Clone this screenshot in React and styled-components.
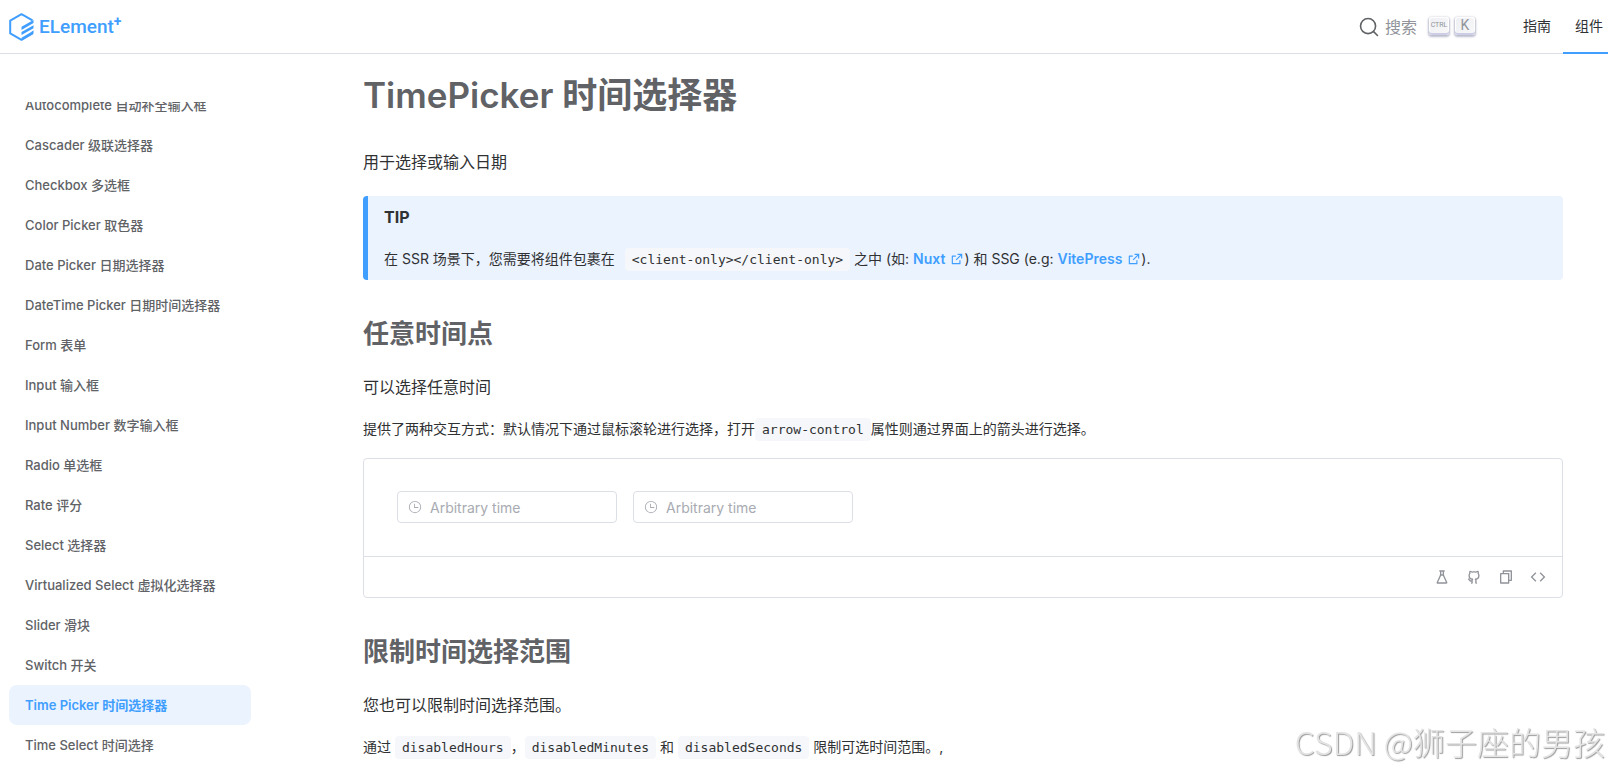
import React from 'react';
import styled, { createGlobalStyle } from 'styled-components';
import {
  RiCodeLine,
  RiExternalLinkLine,
  RiFileCopyLine,
  RiFlaskLine,
  RiGithubLine,
} from 'react-icons/ri';

const GlobalStyle = createGlobalStyle`
  *, *::before, *::after {
    box-sizing: border-box;
  }

  body {
    margin: 0;
    background: #fff;
    color: #303133;
    font-family: Inter, "Noto Sans CJK SC", sans-serif;
    font-size: 14px;
    overflow-x: hidden;
  }
`;

const Header = styled.header`
  display: flex;
  align-items: center;
  justify-content: space-between;
  height: 54px;
  padding-left: 9px;
  border-bottom: 1px solid #dcdfe6;
`;

const Logo = styled.a`
  display: flex;
  align-items: center;
  gap: 5px;
  color: #409eff;
  font-family: Roboto, sans-serif;
  font-size: 19px;
  font-weight: 500;
  line-height: 28px;
  text-decoration: none;

  sup {
    align-self: flex-start;
    margin-left: -5px;
    font-size: 14px;
    font-weight: 700;
    line-height: 16px;
  }
`;

const HeaderRight = styled.div`
  display: flex;
  align-self: stretch;
  align-items: center;
  gap: 36px;
`;

const SearchButton = styled.button`
  display: flex;
  align-items: center;
  padding: 0;
  border: 0;
  background: none;
  color: #909399;
  font-family: inherit;
  font-size: 16px;
  line-height: 24px;
  cursor: pointer;

  svg {
    margin-right: 6px;
    color: #606266;
  }
`;

const Keys = styled.span`
  display: flex;
  gap: 6px;
  margin: 0 0 2px 12px;
`;

const Key = styled.kbd`
  width: 20px;
  height: 18px;
  border-radius: 3px;
  background: linear-gradient(-225deg, #eeeff4, #f8f8f8);
  box-shadow: inset 0 -2px 0 0 #cdcde6, inset 0 0 1px 1px #fff,
    0 1px 2px 1px rgba(30, 35, 90, 0.3);
  color: #909399;
  font-family: Roboto, sans-serif;
  font-size: ${(props) => (props.$small ? '7px' : '14px')};
  line-height: 16px;
  text-align: center;
`;

const Nav = styled.nav`
  display: flex;
  align-self: stretch;
  margin-bottom: -1px;
`;

const NavLink = styled.a`
  display: flex;
  align-items: center;
  padding: ${(props) => (props.$active ? '0 5px 2px 12px' : '0 12px 2px')};
  border-bottom: 2px solid ${(props) => (props.$active ? '#409eff' : 'transparent')};
  color: #303133;
  text-decoration: none;
`;

const Layout = styled.div`
  display: flex;
`;

const Sidebar = styled.aside`
  flex: 0 0 260px;
  margin-top: 48px;
  padding: 0 9px;
  overflow: hidden;
`;

/* the list sits slightly scrolled under the top edge of the sidebar */
const SidebarList = styled.ul`
  margin: -17px 0 0;
  padding: 0;
  list-style: none;
`;

const SidebarLink = styled.a`
  display: block;
  padding: 8px 16px;
  border-radius: 8px;
  background: ${(props) => (props.$active ? '#ebf3ff' : 'transparent')};
  color: ${(props) => (props.$active ? '#409eff' : '#606266')};
  font-size: 13px;
  font-weight: ${(props) => (props.$active ? 600 : 500)};
  line-height: 24px;
  text-decoration: none;
  white-space: nowrap;
`;

const Content = styled.main`
  flex: 1;
  min-width: 0;
  padding: 18px 45px 0 103px;
`;

const Title = styled.h1`
  margin: 0 0 32px;
  color: #606266;
  font-size: 35px;
  font-weight: 600;
  line-height: 46px;
`;

const SubTitle = styled.h2`
  margin: 36px 0 23px;
  color: #606266;
  font-size: 26px;
  font-weight: 700;
  line-height: 36px;
`;

const Lead = styled.p`
  margin: 0;
  font-size: 16px;
  line-height: 24px;
`;

const Text = styled.p`
  margin: 18px 0 0;
  line-height: 24px;
`;

const Code = styled.code`
  padding: 4px 7px;
  border-radius: 4px;
  background: #f5f7fa;
  font-family: "DejaVu Sans Mono", monospace;
  font-size: 13px;
  line-height: 16px;
`;

const Tip = styled.div`
  margin-top: 22px;
  padding: 9px 16px;
  border-left: 5px solid #409eff;
  border-radius: 4px;
  background: #ebf3ff;

  ${Code} {
    margin-left: 6px;
  }
`;

const TipTitle = styled.p`
  margin: 0;
  font-size: 16px;
  font-weight: 700;
  line-height: 24px;
`;

const ExternalLink = styled.a`
  color: #409eff;
  font-weight: 600;
  text-decoration: none;

  svg {
    margin-left: 5px;
    vertical-align: -2px;
  }
`;

const Demo = styled.section`
  margin-top: 17px;
  border: 1px solid #dcdfe6;
  border-radius: 4px;
`;

const Showcase = styled.div`
  display: flex;
  gap: 16px;
  padding: 32px 33px 33px;
`;

const TimeInput = styled.label`
  display: flex;
  align-items: center;
  gap: 8px;
  width: 220px;
  height: 32px;
  padding: 0 10px;
  border: 1px solid #dcdfe6;
  border-radius: 4px;
  color: #a8abb2;

  svg {
    flex: none;
  }

  input {
    flex: 1;
    min-width: 0;
    padding: 0;
    border: 0;
    outline: 0;
    background: none;
    color: #606266;
    font: inherit;
  }

  input::placeholder {
    color: #a8abb2;
  }
`;

const Actions = styled.div`
  display: flex;
  align-items: center;
  justify-content: flex-end;
  gap: 16px;
  height: 41px;
  padding: 0 16px;
  border-top: 1px solid #dcdfe6;
`;

const IconButton = styled.button`
  display: flex;
  padding: 0;
  border: 0;
  background: none;
  color: #909399;
  font-size: 16px;
  cursor: pointer;
`;

const Watermark = styled.div`
  position: fixed;
  right: 3px;
  bottom: 7px;
  color: #e4e4e4;
  font-family: "Noto Sans CJK SC", sans-serif;
  font-size: 32px;
  font-weight: 300;
  line-height: 48px;
  text-shadow: 1px 1px 1px #999;
  white-space: nowrap;
  pointer-events: none;
`;

const components = [
  'Autocomplete 自动补全输入框',
  'Cascader 级联选择器',
  'Checkbox 多选框',
  'Color Picker 取色器',
  'Date Picker 日期选择器',
  'DateTime Picker 日期时间选择器',
  'Form 表单',
  'Input 输入框',
  'Input Number 数字输入框',
  'Radio 单选框',
  'Rate 评分',
  'Select 选择器',
  'Virtualized Select 虚拟化选择器',
  'Slider 滑块',
  'Switch 开关',
  'Time Picker 时间选择器',
  'Time Select 时间选择',
];

function LogoMark() {
  return (
    <svg width="25" height="28" viewBox="0 0 25 28" fill="none" aria-hidden="true">
      <path
        d="M23.5 7.4 12.5 1.2 1.2 7.6v12.8l11.3 6.4 11-6.3"
        stroke="#409eff"
        strokeWidth="2"
        strokeLinejoin="round"
      />
      <path
        d="M24.5 7v3L12.5 17v-3.2zM24.5 12.2v3L12.5 22v-3zM24.5 17.2v3.6L12.5 27.6v-2.8L21.8 19.3z"
        fill="#409eff"
      />
    </svg>
  );
}

function SearchIcon() {
  return (
    <svg width="20" height="20" viewBox="0 0 20 20" aria-hidden="true">
      <path
        d="M14.386 14.386l4.0877 4.0877-4.0877-4.0877c-2.9418 2.9419-7.7115 2.9419-10.6533 0-2.9419-2.9418-2.9419-7.7115 0-10.6533 2.9418-2.9419 7.7115-2.9419 10.6533 0 2.9419 2.9418 2.9419 7.7115 0 10.6533z"
        fill="none"
        stroke="currentColor"
        strokeWidth="1.6"
        strokeLinecap="round"
        strokeLinejoin="round"
      />
    </svg>
  );
}

function ClockIcon() {
  return (
    <svg width="14" height="14" viewBox="0 0 1024 1024" fill="currentColor" aria-hidden="true">
      <path d="M512 896a384 384 0 1 0 0-768 384 384 0 0 0 0 768m0 64a448 448 0 1 1 0-896 448 448 0 0 1 0 896" />
      <path d="M480 256a32 32 0 0 1 32 32v256a32 32 0 0 1-64 0V288a32 32 0 0 1 32-32" />
      <path d="M480 512h256q32 0 32 32t-32 32H480q-32 0-32-32t32-32" />
    </svg>
  );
}

function TimeField() {
  return (
    <TimeInput>
      <ClockIcon />
      <input type="text" placeholder="Arbitrary time" aria-label="Arbitrary time" />
    </TimeInput>
  );
}

export default function App() {
  return (
    <>
      <GlobalStyle />
      <Header>
        <Logo href="#">
          <LogoMark />
          ELement
          <sup>+</sup>
        </Logo>
        <HeaderRight>
          <SearchButton type="button">
            <SearchIcon />
            搜索
            <Keys>
              <Key $small>CTRL</Key>
              <Key>K</Key>
            </Keys>
          </SearchButton>
          <Nav>
            <NavLink href="#guide">指南</NavLink>
            <NavLink href="#component" $active>组件</NavLink>
          </Nav>
        </HeaderRight>
      </Header>

      <Layout>
        <Sidebar>
          <SidebarList>
            {components.map((name) => (
              <li key={name}>
                <SidebarLink href="#component" $active={name.startsWith('Time Picker')}>
                  {name}
                </SidebarLink>
              </li>
            ))}
          </SidebarList>
        </Sidebar>

        <Content>
          <Title>TimePicker 时间选择器</Title>
          <Lead>用于选择或输入日期</Lead>
          <Tip>
            <TipTitle>TIP</TipTitle>
            <Text>
              在 SSR 场景下，您需要将组件包裹在 <Code>&lt;client-only&gt;&lt;/client-only&gt;</Code> 之中 (如:{' '}
              <ExternalLink href="#nuxt">Nuxt<RiExternalLinkLine /></ExternalLink>) 和 SSG (e.g:{' '}
              <ExternalLink href="#vitepress">VitePress<RiExternalLinkLine /></ExternalLink>).
            </Text>
          </Tip>

          <SubTitle>任意时间点</SubTitle>
          <Lead>可以选择任意时间</Lead>
          <Text>
            提供了两种交互方式：默认情况下通过鼠标滚轮进行选择，打开<Code>arrow-control</Code>属性则通过界面上的箭头进行选择。
          </Text>
          <Demo>
            <Showcase>
              <TimeField />
              <TimeField />
            </Showcase>
            <Actions>
              <IconButton type="button" aria-label="Playground"><RiFlaskLine /></IconButton>
              <IconButton type="button" aria-label="GitHub"><RiGithubLine /></IconButton>
              <IconButton type="button" aria-label="Copy code"><RiFileCopyLine /></IconButton>
              <IconButton type="button" aria-label="View source"><RiCodeLine /></IconButton>
            </Actions>
          </Demo>

          <SubTitle>限制时间选择范围</SubTitle>
          <Lead>您也可以限制时间选择范围。</Lead>
          <Text>
            通过 <Code>disabledHours</Code>，<Code>disabledMinutes</Code> 和 <Code>disabledSeconds</Code> 限制可选时间范围。,
          </Text>
        </Content>
      </Layout>
      <Watermark>CSDN @狮子座的男孩</Watermark>
    </>
  );
}
